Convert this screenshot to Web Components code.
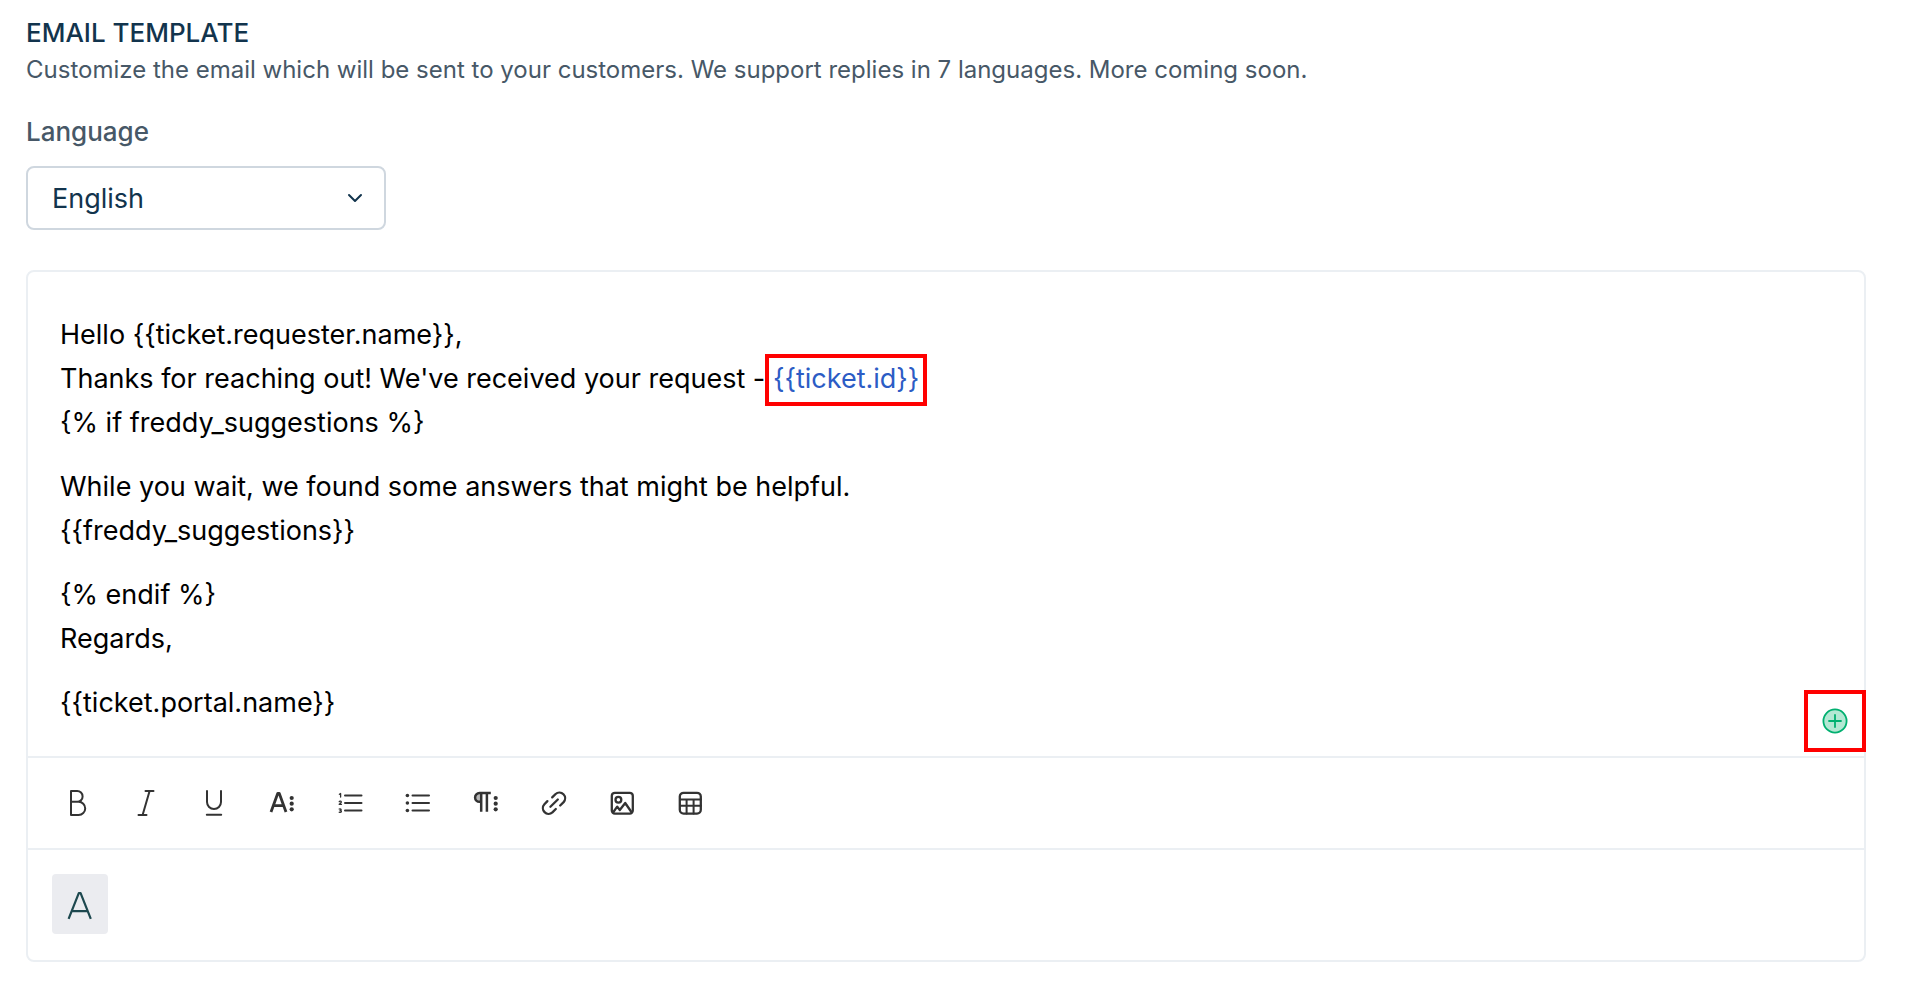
<!DOCTYPE html>
<html lang="en">
<head>
<meta charset="utf-8">
<title>Email template</title>
<style>
  body {
    margin: 0;
    background: #fff;
    color: #12344d;
    font-family: Inter, "Liberation Sans", sans-serif;
  }
</style>
</head>
<body>

<email-template-page>
  <section-heading slot="heading">
    EMAIL TEMPLATE
    <span slot="description">Customize the email which will be sent to your customers. We support replies in 7 languages. More coming soon.</span>
  </section-heading>

  <language-select label="Language" options="English,French,German,Spanish,Portuguese,Italian,Dutch"></language-select>

  <template-editor>
    <p>Hello {{ticket.requester.name}},<br>Thanks for reaching out! We've received your request - <place-holder>{{ticket.id}}</place-holder><br>{% if freddy_suggestions %}</p>
    <p>While you wait, we found some answers that might be helpful.<br>{{freddy_suggestions}}</p>
    <p>{% endif %}<br>Regards,</p>
    <p>{{ticket.portal.name}}</p>
    <insert-button slot="insert"></insert-button>
    <editor-toolbar slot="toolbar">
      <tool-button icon="bold" label="Bold"></tool-button>
      <tool-button icon="italic" label="Italic"></tool-button>
      <tool-button icon="underline" label="Underline"></tool-button>
      <tool-button icon="text" label="More text options"></tool-button>
      <tool-button icon="ordered" label="Ordered list"></tool-button>
      <tool-button icon="unordered" label="Unordered list"></tool-button>
      <tool-button icon="paragraph" label="More paragraph options"></tool-button>
      <tool-button icon="link" label="Insert link"></tool-button>
      <tool-button icon="image" label="Insert image"></tool-button>
      <tool-button icon="table" label="Insert table"></tool-button>
    </editor-toolbar>
    <tool-button slot="footer" icon="format" label="Text formatting" active></tool-button>
  </template-editor>
</email-template-page>

<script>
(function () {
  // 32x32 icons, drawn with strokes
  var DOTS = '<g fill="currentColor" stroke="none"><circle cx="25.7" cy="11" r="2.1"/><circle cx="25.7" cy="16.7" r="2.1"/><circle cx="25.7" cy="22.3" r="2.1"/></g>';
  var ICONS = {
    bold: '<path d="M9 4h6.2a5.4 5.4 0 0 1 0 10.8H9h7.6a6.6 6.6 0 0 1 0 13.2H9z"/>',
    italic: '<path d="M15.5 4h8M8.5 28h8M19.6 4l-7 24"/>',
    underline: '<path d="M9 4v11a7 7 0 0 0 14 0V4M8.8 27.8h14.4"/>',
    text: '<path stroke-width="2.8" stroke-linecap="butt" d="M5 25l6.8-18.7h1.4L20 25M7.8 18.6h9.6"/>' + DOTS,
    ordered: '<path d="M11 8.5h16.5M11 16h16.5M11 23.5h16.5"/><path stroke-width="1.3" d="M5.4 7.3l1.2-.8v3.6M5.2 14.7c.4-.9 2.3-.7 2.1.5-.1.7-1.2 1.2-2.1 2.1h2.3M5.2 22c1.9-.7 2.7 1.2.9 1.5 2.2.2 1.4 2.5-.9 1.7"/>',
    unordered: '<path d="M10.5 8.5H27M10.5 16H27M10.5 23.5H27"/><g fill="currentColor" stroke="none"><circle cx="5.4" cy="8.5" r="1.8"/><circle cx="5.4" cy="16" r="1.8"/><circle cx="5.4" cy="23.5" r="1.8"/></g>',
    paragraph: '<path stroke-width="2.5" stroke-linecap="butt" d="M20.8 6H9.5a4.3 4.3 0 0 0 0 8.8H11M11.2 6v18.8M16.9 6v18.8"/><path stroke="none" fill="currentColor" fill-opacity=".35" d="M11 6H9.5a4.3 4.3 0 0 0 0 8.8H11z"/>' + DOTS,
    link: '<path stroke-width="2.3" d="M14.2 10.4L17.6 7a5.7 5.7 0 0 1 8 8.1l-3.4 3.4M17.8 22l-3.4 3.4a5.7 5.7 0 0 1-8-8.1l3-3.2M12.4 19.7l7.4-7.2"/>',
    image: '<g stroke-width="2.3"><rect x="5.8" y="5.8" width="21" height="20.8" rx="3"/><circle cx="12.4" cy="12.8" r="2.9"/><path d="M7.4 25l3.8-5.4 2.6 3.4L19.2 16l6.2 9"/></g>',
    table: '<rect stroke-width="2.3" x="5.8" y="5.8" width="21" height="20.8" rx="3.8"/><path d="M6 12.6h21M6 18.8h21M12.6 12.6v13.8M19.6 12.6v13.8"/>',
    format: '<path stroke="#1d484f" stroke-width="2.2" stroke-linecap="butt" d="M4.6 30.8L14.8 5.2h1.8l10.2 25.6M7.8 23.2h15.8"/>'
  };

  function define(name, html, setup) {
    customElements.define(name, class extends HTMLElement {
      constructor() {
        super();
        this.attachShadow({ mode: 'open' }).innerHTML = html;
      }

      connectedCallback() {
        if (setup) setup(this, this.shadowRoot);
      }
    });
  }

  define('email-template-page', [
    '<style>',
    ':host{display:block;padding:16px 44px 40px 26px;}',
    'main{display:flex;flex-direction:column;}',
    '</style>',
    '<main><slot name="heading"></slot><slot></slot></main>'
  ].join(''));

  define('section-heading', [
    '<style>',
    ':host{display:block;}',
    'h1{margin:0;font-size:26px;line-height:34px;font-weight:500;}',
    'p{margin:0;font-size:24px;line-height:40px;color:#475867;}',
    '</style>',
    '<h1><slot></slot></h1>',
    '<p><slot name="description"></slot></p>'
  ].join(''));

  define('language-select', [
    '<style>',
    ':host{display:flex;flex-direction:column;align-items:flex-start;gap:16px;margin:24px 0 40px;}',
    'label{font-size:26px;line-height:36px;font-weight:500;color:#475867;}',
    '.field{display:grid;align-items:center;width:360px;}',
    'select,svg{grid-area:1/1;}',
    'select{appearance:none;width:100%;height:64px;padding:2px 24px 0;border:2px solid #cfd7df;border-radius:8px;background:#fff;color:#12344d;font:400 27px/40px Inter,"Liberation Sans",sans-serif;}',
    'svg{justify-self:end;margin-right:20px;pointer-events:none;}',
    '</style>',
    '<label for="lang"></label>',
    '<div class="field"><select id="lang"></select>',
    '<svg width="22" height="22" viewBox="0 0 22 22" fill="none" stroke="#12344d" stroke-width="2" stroke-linecap="round" stroke-linejoin="round"><path d="M5 8l6 6 6-6"/></svg></div>'
  ].join(''), function (host, root) {
    root.querySelector('label').textContent = host.getAttribute('label');
    root.querySelector('select').innerHTML = host.getAttribute('options').split(',').map(function (o) {
      return '<option>' + o + '</option>';
    }).join('');
  });

  define('template-editor', [
    '<style>',
    ':host{display:block;border:2px solid #ebeff3;border-radius:8px;}',
    '.body{position:relative;padding:41px 32px 31px;color:#000;font-size:27px;line-height:44px;}',
    '.text{outline:0;}',
    '::slotted(p){margin:0 0 20px;}',
    '::slotted(p:last-of-type){margin-bottom:0;}',
    '::slotted(insert-button){position:absolute;right:-2px;bottom:4px;}',
    '.footer{display:flex;padding:24px 24px 26px;border-top:2px solid #ebeff3;}',
    '</style>',
    '<div class="body"><div class="text" role="textbox" aria-multiline="true" aria-label="Email body"><slot></slot></div><slot name="insert"></slot></div>',
    '<slot name="toolbar"></slot>',
    '<div class="footer"><slot name="footer"></slot></div>'
  ].join(''));

  define('place-holder', [
    '<style>',
    ':host{position:relative;color:#2c5cc5;}',
    // the frame lies over the line and takes no room in it
    ':host::after{content:"";position:absolute;inset:-8px -8px -11px;border:4px solid #f00;}',
    '</style>',
    '<slot></slot>'
  ].join(''));

  define('insert-button', [
    '<style>',
    ':host{display:block;}',
    'button{display:grid;place-items:center;box-sizing:border-box;width:62px;height:62px;padding:0;border:4px solid #f00;background:#fff;cursor:pointer;}',
    '</style>',
    '<button type="button" aria-label="Insert placeholder"><svg width="28" height="28" viewBox="0 0 28 28" fill="none" stroke="#00b070" stroke-width="1.8" stroke-linecap="round"><circle cx="14" cy="14" r="11.6" fill="#b3e8d3"/><path d="M14 8v12M8 14h12"/></svg></button>'
  ].join(''));

  define('editor-toolbar', [
    '<style>',
    ':host{display:block;border-top:2px solid #ebeff3;}',
    'div{display:flex;gap:24px;padding:20px 28px;}',
    '</style>',
    '<div role="toolbar" aria-label="Formatting"><slot></slot></div>'
  ].join(''));

  define('tool-button', [
    '<style>',
    ':host{display:block;}',
    'button{display:grid;place-items:center;width:44px;height:50px;padding:0;border:0;border-radius:4px;background:none;color:#333;cursor:pointer;}',
    ':host([active]) button{width:56px;height:60px;background:#ebecf0;}',
    '</style>',
    '<button type="button"><svg width="32" height="32" viewBox="0 0 32 32" fill="none" stroke="currentColor" stroke-width="2" stroke-linecap="round" stroke-linejoin="round"></svg></button>'
  ].join(''), function (host, root) {
    root.querySelector('button').setAttribute('aria-label', host.getAttribute('label'));
    root.querySelector('svg').innerHTML = ICONS[host.getAttribute('icon')];
  });
})();
</script>
</body>
</html>
